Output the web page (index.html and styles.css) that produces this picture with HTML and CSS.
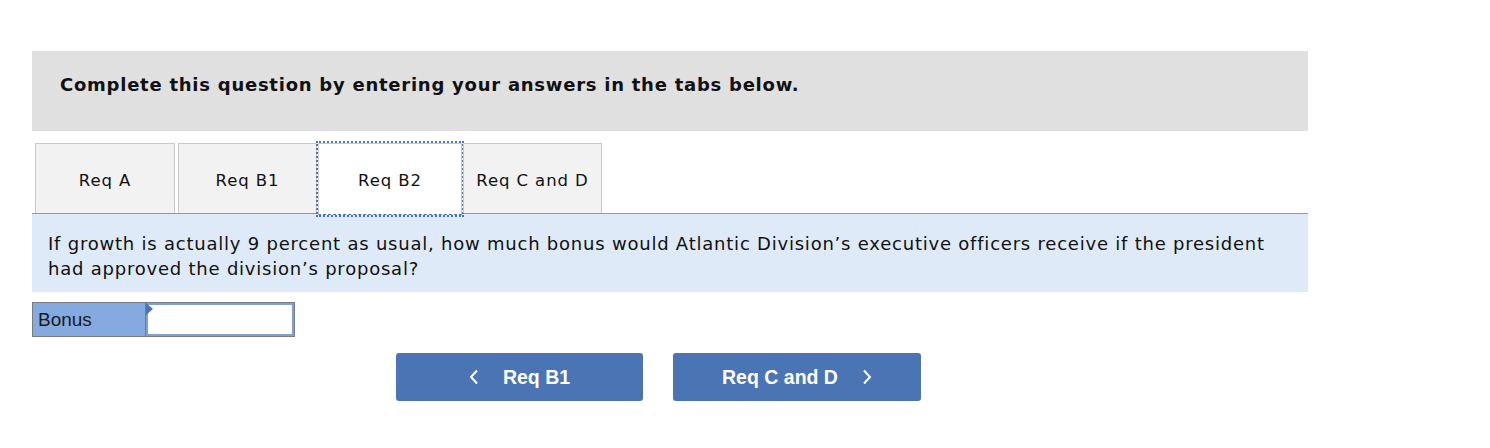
FILE: index.html
```html
<!DOCTYPE html>
<html>
<head>
<meta charset="utf-8">
<link rel="stylesheet" href="styles.css">
</head>
<body>
<div class="wrap">
  <div class="header">Complete this question by entering your answers in the tabs below.</div>
  <div class="tabs">
    <div class="tab t1">Req A</div>
    <div class="tab t2">Req B1</div>
    <div class="tab active">Req B2</div>
    <div class="tab t4">Req C and D</div>
  </div>
  <div class="question">If growth is actually 9 percent as usual, how much bonus would Atlantic Division’s executive officers receive if the president had approved the division’s proposal?</div>
  <div class="answer">
    <div class="label">Bonus</div>
    <div class="input"><span class="flag"></span></div>
  </div>
  <div class="nav">
    <div class="btn prev"><svg class="chev" width="10" height="16" viewBox="0 0 10 16"><path d="M8 1.5 L2 8 L8 14.5" fill="none" stroke="#fff" stroke-width="2"/></svg><span>Req B1</span></div>
    <div class="btn next"><span>Req C and D</span><svg class="chev" width="10" height="16" viewBox="0 0 10 16"><path d="M2 1.5 L8 8 L2 14.5" fill="none" stroke="#fff" stroke-width="2"/></svg></div>
  </div>
</div>
</body>
</html>
```

FILE: styles.css
```css
html, body {
  margin: 0;
  padding: 0;
  background: #ffffff;
}
body {
  font-family: "DejaVu Sans", Verdana, sans-serif;
  color: #111;
}
.wrap {
  width: 1276px;
  margin-left: 32px;
  padding-top: 51px;
}
.header {
  background: #e0e0e0;
  height: 80px;
  box-sizing: border-box;
  padding: 22px 0 0 28px;
  font-weight: bold;
  font-size: 18px;
  letter-spacing: 0.75px;
  line-height: 24px;
}
.tabs {
  display: flex;
  margin-top: 12px;
  padding-left: 3px;
  border-bottom: 1px solid #999;
  height: 70px;
  align-items: flex-end;
}
.tab {
  box-sizing: border-box;
  height: 70px;
  background: #f2f2f2;
  border: 1px solid #c9c9c9;
  border-bottom: none;
  display: flex;
  align-items: center;
  justify-content: center;
  font-size: 16.5px;
  letter-spacing: 0.9px;
  padding-top: 3px;
}
.t1 { width: 140px; margin-right: 3px; }
.t2 { width: 139px; margin-right: 1px; }
.active {
  width: 144px;
  margin-right: 1px;
  background: #fff;
  outline: 2px dotted #4a74b4;
  outline-offset: 0;
  height: 72px;
  margin-bottom: -2px;
  border: 1px solid #c9c9c9;
  border-bottom: 1px dashed #4a74b4;
  padding-top: 2px;
}
.t4 { width: 139px; }
.question {
  background: #deeaf7;
  padding: 17px 16px 12px 16px;
  font-size: 18px;
  letter-spacing: 0.78px;
  line-height: 25px;
  height: 78px;
  box-sizing: border-box;
}
.answer {
  display: flex;
  margin-top: 10px;
  width: 263px;
  height: 35px;
  border: 1px solid #7b7b7b;
  box-sizing: border-box;
}
.label {
  width: 113px;
  background: #84aadf;
  font-family: "Liberation Sans", Arial, sans-serif;
  font-size: 19px;
  padding: 6px 0 0 5px;
  box-sizing: border-box;
  color: #1a1a1a;
  border-right: 1px solid #6f7f96;
}
.input {
  flex: 1;
  background: #fff;
  border: 2px solid #7da0d6;
  position: relative;
}
.flag {
  position: absolute;
  left: -2px;
  top: -2px;
  width: 0;
  height: 0;
  border-top: 6px solid transparent;
  border-bottom: 6px solid transparent;
  border-left: 7px solid #4a74b4;
}
.nav {
  display: flex;
  gap: 30px;
  margin-top: 16px;
  margin-left: 364px;
}
.btn {
  width: 247px;
  height: 48px;
  background: #4a74b4;
  border-radius: 3px;
  color: #fff;
  font-family: "Liberation Sans", Arial, sans-serif;
  font-weight: bold;
  font-size: 19.5px;
  display: flex;
  align-items: center;
  justify-content: center;
  gap: 24px;
}
.next { width: 248px; }
.chev {
  display: block;
}
```
